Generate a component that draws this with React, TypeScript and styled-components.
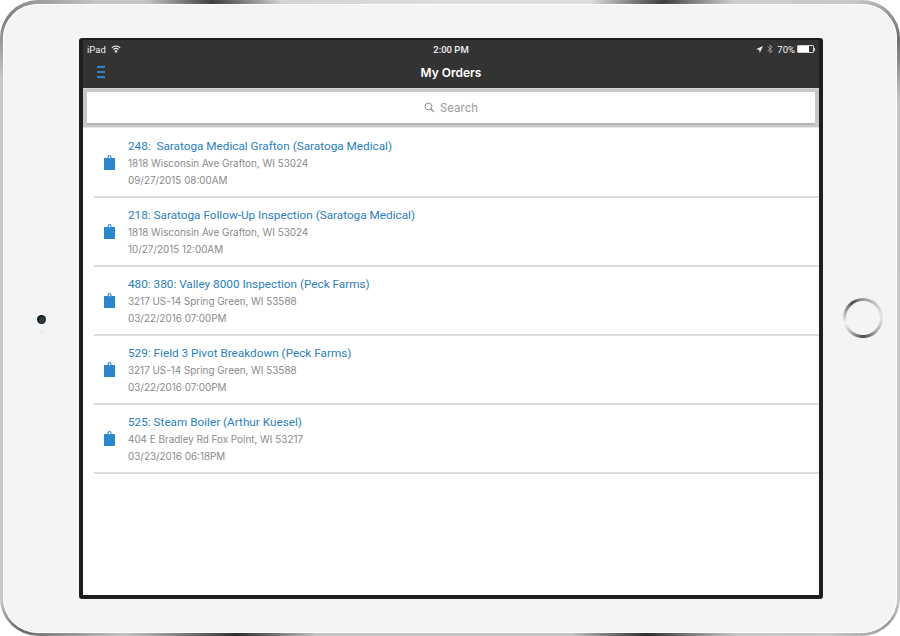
import { createGlobalStyle } from 'styled-components';
import styled from 'styled-components';

const GlobalStyle = createGlobalStyle`
  html, body {
    margin: 0;
    padding: 0;
    background: #fff;
  }
  body {
    font-family: Inter, "Liberation Sans", sans-serif;
    -webkit-font-smoothing: antialiased;
  }
`;

const StyledDevice = styled.div`
  width: 900px;
  height: 636px;
  box-sizing: border-box;
  display: grid;
  grid-template-columns: 76px 744px 1fr;
  padding-top: 34px;
  border: solid transparent;
  border-width: 4px 3px 3px 3px;
  border-radius: 38px;
  overflow: hidden;
  background:
    linear-gradient(#f3f4f6, #f3f4f6) padding-box,
    conic-gradient(
      from 0deg at 450px 318px,
      #dcdedc 0deg,
      #dcdedc 24deg,
      #3f3f3f 34deg,
      #cfcfcf 42deg,
      #c8c8c8 52deg,
      #6d6d6d 58deg,
      #c4c4c4 64deg,
      #c9c9c9 122deg,
      #9a9a9a 125deg,
      #c9c9c9 130deg,
      #c4c4c4 138deg,
      #2e2e2e 148deg,
      #c4c4c4 159deg,
      #c4c4c4 203deg,
      #2e2e2e 214deg,
      #c4c4c4 226deg,
      #6a6a6a 234deg,
      #c8c8c8 238deg,
      #c8c8c8 298deg,
      #7e7e7e 304deg,
      #c6c6c6 312deg,
      #c6c6c6 316deg,
      #3f3f3f 323deg,
      #d4d4d4 332deg,
      #dcdedc 360deg
    ) border-box;
  box-shadow: inset 0 0 0 1px #ffffff;
`;

const StyledLeftBezel = styled.div`
  display: flex;
  flex-direction: column;
  align-items: center;
  padding-top: 277px;
  padding-left: 1px;
  gap: 6px;
  box-sizing: border-box;
`;

const StyledCamera = styled.div`
  width: 9px;
  height: 9px;
  border-radius: 50%;
  background: radial-gradient(circle at 55% 55%, #2c3a42 0 30%, #0d0f10 70%);
`;

const StyledSensor = styled.div`
  width: 5px;
  height: 5px;
  border-radius: 50%;
  background: #ececee;
`;

const StyledRightBezel = styled.div`
  display: flex;
  justify-content: flex-start;
  padding-top: 260px;
  padding-left: 20px;
`;

const StyledHomeButton = styled.div`
  width: 40px;
  height: 40px;
  box-sizing: border-box;
  border-radius: 50%;
  padding: 3px;
  background: conic-gradient(
    from 0deg,
    #9a9a9a,
    #c9c9c9 45deg,
    #e6e6e6 90deg,
    #b5b5b5 130deg,
    #4a4a4a 180deg,
    #c0c0c0 225deg,
    #f4f4f4 255deg,
    #c0c0c0 280deg,
    #4f4f4f 325deg,
    #9a9a9a
  );
  &::after {
    content: '';
    display: block;
    width: 100%;
    height: 100%;
    border-radius: 50%;
    background: #f3f4f6;
  }
`;

const StyledScreen = styled.div`
  height: 561px;
  box-sizing: border-box;
  border: solid #1d1e1f;
  border-width: 2px 4px 4px 4px;
  border-radius: 3px;
  background: #fff;
  display: flex;
  flex-direction: column;
  overflow: hidden;
`;

const StyledHeader = styled.header`
  height: 48px;
  flex: none;
  background: #333333;
  color: #fff;
  display: flex;
  flex-direction: column;
`;

const StyledStatusBar = styled.div`
  height: 18px;
  padding: 0 4px;
  display: grid;
  grid-template-columns: 1fr auto 1fr;
  align-items: center;
  font-family: Roboto, sans-serif;
  font-size: 9.5px;
  color: #f2f2f2;

  .left, .right {
    display: flex;
    align-items: center;
    gap: 5px;
  }
  .right {
    justify-content: flex-end;
    gap: 4px;
  }
  .time {
    font-weight: 500;
  }
`;

const StyledNavBar = styled.div`
  flex: 1;
  display: grid;
  grid-template-columns: 1fr auto 1fr;
  align-items: center;
  padding: 0 14px 2px;
  h1 {
    margin: 0;
    font-size: 12px;
    font-weight: 600;
  }
`;

const StyledMenuIcon = styled.div`
  width: 8px;
  display: flex;
  flex-direction: column;
  gap: 3px;
  span {
    height: 2px;
    background: #2a83c5;
  }
`;

const StyledBattery = styled.div`
  display: flex;
  align-items: center;
  margin-left: -2px;
  .body {
    width: 17px;
    height: 8px;
    box-sizing: border-box;
    border: 1px solid #cfcfcf;
    border-radius: 1px;
    background: linear-gradient(90deg, #fff 0 72%, transparent 72%);
  }
  .tip {
    width: 1px;
    height: 3px;
    background: #cfcfcf;
  }
`;

const StyledSearchWrap = styled.div`
  height: 40px;
  flex: none;
  box-sizing: border-box;
  background: #c7c7c7;
  padding: 3px 4px 0;
  border-top: 1px solid #d6d6d6;
  border-bottom: 1px solid #e6e6e6;
`;

const StyledSearchField = styled.div`
  height: 31px;
  background: #fff;
  display: flex;
  align-items: center;
  justify-content: center;
  gap: 5px;
  color: #9b9b9b;
  font-size: 11.5px;
  box-shadow: 0 2px 0 #b4b4b4;
`;

const StyledList = styled.ul`
  list-style: none;
  margin: 0;
  padding: 1px 0 0;
`;

const StyledRow = styled.li`
  height: 69px;
  box-sizing: border-box;
  margin-left: 11px;
  border-bottom: 2px solid #dcdcdc;
  display: flex;
  align-items: center;
  gap: 13px;
  padding-left: 10px;
`;

const StyledRowText = styled.div`
  display: flex;
  flex-direction: column;
  gap: 5px;
  .title {
    color: #2a80bf;
    font-family: Roboto, sans-serif;
    font-size: 11.75px;
    line-height: 15px;
    white-space: pre;
    margin-bottom: -2px;
  }
  .line {
    color: #8a8a8a;
    font-size: 9.9px;
    line-height: 12px;
  }
`;

const ClipboardIcon = () => (
  <svg width='11' height='15' viewBox='0 0 11 15' style={{ flex: 'none' }}>
    <path
      fill='#2a87cc'
      fillRule='evenodd'
      d='M3.5 3V2a2 2 0 0 1 4 0v1H11v12H0V3zM4.6 3.2h1.8V2a.9.9 0 0 0-1.8 0z'
    />
  </svg>
);

const orders = [
  { title: '248:  Saratoga Medical Grafton (Saratoga Medical)', address: '1818 Wisconsin Ave Grafton, WI 53024', date: '09/27/2015 08:00AM' },
  { title: '218: Saratoga Follow-Up Inspection (Saratoga Medical)', address: '1818 Wisconsin Ave Grafton, WI 53024', date: '10/27/2015 12:00AM' },
  { title: '480: 380: Valley 8000 Inspection (Peck Farms)', address: '3217 US-14 Spring Green, WI 53588', date: '03/22/2016 07:00PM' },
  { title: '529: Field 3 Pivot Breakdown (Peck Farms)', address: '3217 US-14 Spring Green, WI 53588', date: '03/22/2016 07:00PM' },
  { title: '525: Steam Boiler (Arthur Kuesel)', address: '404 E Bradley Rd Fox Point, WI 53217', date: '03/23/2016 06:18PM' },
];

const App = () => (
  <>
    <GlobalStyle />
    <StyledDevice>
      <StyledLeftBezel>
        <StyledCamera />
        <StyledSensor />
      </StyledLeftBezel>
      <StyledScreen>
        <StyledHeader>
          <StyledStatusBar>
            <div className='left'>
              <span>iPad</span>
              <svg width='10' height='8' viewBox='0 0 10 8'>
                <path d='M5 8 3.4 6a2.4 2.4 0 0 1 3.2 0z' fill='#f2f2f2' />
                <path d='M2.4 4.6a3.9 3.9 0 0 1 5.2 0M.8 2.8a6.2 6.2 0 0 1 8.4 0' fill='none' stroke='#f2f2f2' strokeWidth='1.1' />
              </svg>
            </div>
            <span className='time'>2:00 PM</span>
            <div className='right'>
              <svg width='7' height='7' viewBox='0 0 7 7'>
                <path d='M7 0 0 3.2l3.2.5.5 3.3z' fill='#f2f2f2' />
              </svg>
              <svg width='6' height='10' viewBox='0 0 6 10'>
                <path d='M.6 2.8 5.2 6.9 3 9V1l2.2 2.1L.6 7.2' fill='none' stroke='#9a9a9a' strokeWidth='.9' />
              </svg>
              <span>70%</span>
              <StyledBattery>
                <div className='body' />
                <div className='tip' />
              </StyledBattery>
            </div>
          </StyledStatusBar>
          <StyledNavBar>
            <StyledMenuIcon>
              <span />
              <span />
              <span />
            </StyledMenuIcon>
            <h1>My Orders</h1>
          </StyledNavBar>
        </StyledHeader>
        <StyledSearchWrap>
          <StyledSearchField>
            <svg width='11' height='11' viewBox='0 0 11 11'>
              <circle cx='4.5' cy='4.5' r='3.4' fill='none' stroke='#8e8e8e' strokeWidth='1' />
              <path d='m7 7 3.2 3.2' stroke='#8e8e8e' strokeWidth='1.2' />
            </svg>
            <span>Search</span>
          </StyledSearchField>
        </StyledSearchWrap>
        <StyledList>
          {orders.map((order) => (
            <StyledRow key={order.title}>
              <ClipboardIcon />
              <StyledRowText>
                <span className='title'>{order.title}</span>
                <span className='line'>{order.address}</span>
                <span className='line'>{order.date}</span>
              </StyledRowText>
            </StyledRow>
          ))}
        </StyledList>
      </StyledScreen>
      <StyledRightBezel>
        <StyledHomeButton />
      </StyledRightBezel>
    </StyledDevice>
  </>
);

export default App;
